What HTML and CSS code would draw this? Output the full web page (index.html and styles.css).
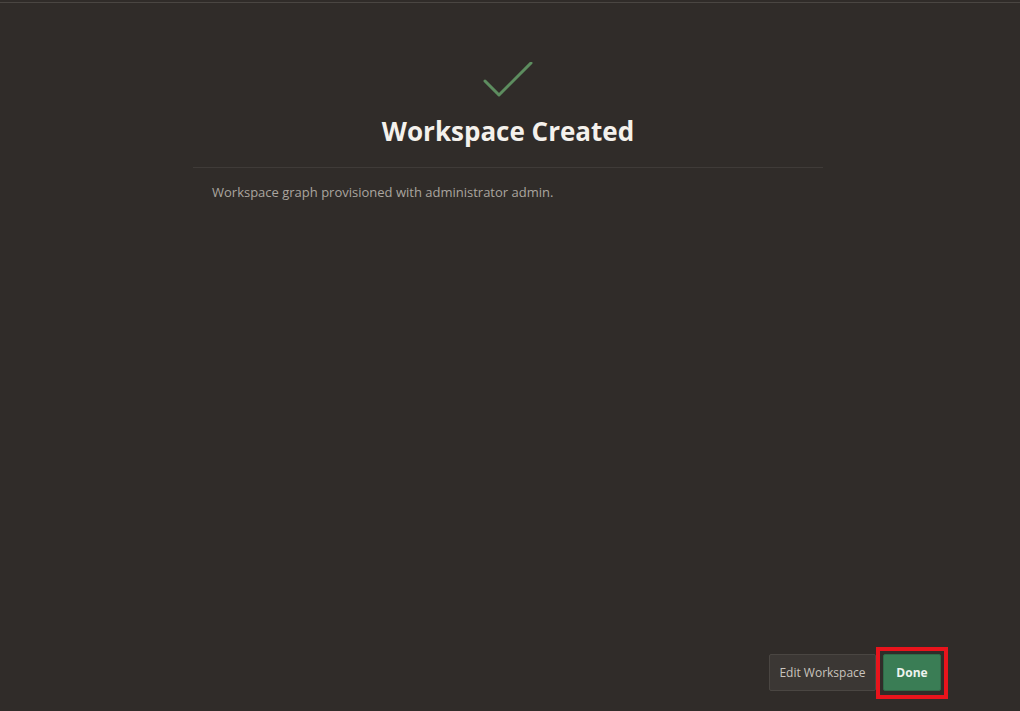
FILE: index.html
```html
<!DOCTYPE html>
<html>
<head>
<meta charset="utf-8">
<link rel="stylesheet" href="styles.css">
</head>
<body>
<div class="frame">
  <main class="content">
    <div class="check">
      <svg width="52" height="38" viewBox="0 0 52 38"><path d="M3 19 L17 33 L49 1" fill="none" stroke="#5d8d5f" stroke-width="3" stroke-linecap="round" stroke-linejoin="round"/></svg>
    </div>
    <h1 class="title">Workspace Created</h1>
    <div class="rule"></div>
    <p class="message">Workspace graph provisioned with administrator admin.</p>
  </main>
  <footer class="actions">
    <button class="btn btn-secondary">Edit Workspace</button>
    <span class="highlight">
      <button class="btn btn-primary">Done</button>
    </span>
  </footer>
</div>
</body>
</html>
```
FILE: styles.css
```css
html, body {
  margin: 0;
  padding: 0;
  height: 100%;
  background: #302c29;
}
body {
  font-family: "Open Sans", "DejaVu Sans", sans-serif;
}
.frame {
  box-sizing: border-box;
  height: 711px;
  border-top: 1px solid #4a4642;
  margin-top: 2px;
  border-bottom: 1px solid #3e3a37;
  display: flex;
  flex-direction: column;
}
.content {
  flex: 1;
  display: flex;
  flex-direction: column;
  align-items: center;
  padding-top: 59px;
  padding-right: 4px;
}
.check {
  height: 38px;
}
.check svg { display: block; }
.title {
  margin: 14px 0 0 0;
  font-size: 26px;
  font-weight: 700;
  color: #f4f1ec;
  line-height: 34px;
}
.rule {
  width: 630px;
  height: 1px;
  background: #3f3b38;
  margin-top: 19px;
}
.message {
  width: 592px;
  margin: 15px 0 0 0;
  font-size: 13px;
  line-height: 18px;
  color: #aaa59f;
}
.actions {
  display: flex;
  justify-content: flex-end;
  align-items: center;
  gap: 7px;
  padding: 0 79px 21px 0;
}
.btn {
  height: 37px;
  font-family: inherit;
  font-size: 12px;
  border-radius: 2px;
  cursor: pointer;
}
.btn-secondary {
  width: 107px;
  background: #3b3734;
  border: 1px solid #4a4642;
  color: #c9c4be;
}
.btn-primary {
  width: 58px;
  background: #3a7d55;
  border: 1px solid #2f6a47;
  color: #eef3ef;
  font-weight: 700;
}
.highlight {
  position: relative;
  display: block;
}
.highlight::after {
  content: "";
  position: absolute;
  left: -7px;
  top: -7px;
  right: -7px;
  bottom: -8px;
  border: 4px solid #e8141c;
  pointer-events: none;
}
```
